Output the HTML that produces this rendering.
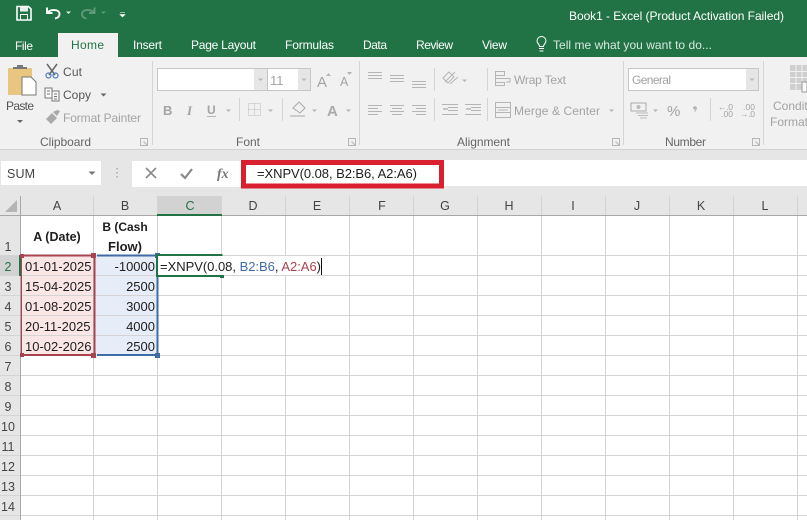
<!DOCTYPE html>
<html><head><meta charset="utf-8"><style>
html,body{margin:0;padding:0;background:#fff;width:807px;height:520px;overflow:hidden}
svg{display:block}
text{font-family:"Liberation Sans",sans-serif;font-size:12px}
.t{fill:#fff}.g{fill:#a3a3a3}.l{fill:#666}.c{fill:#1e1e1e;font-size:13px}.h{fill:#444;font-size:12.5px;text-anchor:middle}
.i{fill:none;stroke:#b5b5b5;stroke-width:1}
.d{fill:#b5b5b5}
</style></head><body>
<svg width="807" height="520" viewBox="0 0 807 520" xmlns="http://www.w3.org/2000/svg">
<!-- title bar -->
<rect width="807" height="57" fill="#217346"/>
<path d="M17 6.500h11.500l2.500 2.500V20H17z" fill="none" stroke="#fff" stroke-width="1.600"/>
<rect x="20" y="6.500" width="8" height="5" fill="#fff" opacity=".9"/><rect x="20.500" y="14.500" width="7" height="5.500" fill="none" stroke="#fff"/>
<path d="M47 7.500v5.500h5.500M47.500 12.500c3-3.500 12-3.500 12 1.500 0 2.500-2 4-4.500 4.500" fill="none" stroke="#fff" stroke-width="1.900"/>
<path d="M66 11.500h5l-2.500 2.500z" fill="#dfe9e3"/>
<path d="M94.500 7.500v5.500h-5.500M94 12.500c-3-3.500-12-3.500-12 1.500 0 2.500 2 4 4.500 4.500" fill="none" stroke="#5f9a7c" stroke-width="1.900"/>
<path d="M101 11.500h5l-2.500 2.500z" fill="#5f9a7c"/>
<path d="M120 12.500h5M120 14.500h5l-2.500 2.500z" fill="#fff" stroke="#fff" stroke-width=".6"/>
<text x="569" y="20" class="t" textLength="215">Book1 - Excel (Product Activation Failed)</text>
<!-- tabs -->
<rect x="58" y="33" width="60" height="24" fill="#f1f1f1"/>
<text x="15" y="50" class="t" textLength="18">File</text>
<text x="71" y="49" fill="#217346" textLength="33">Home</text>
<text x="133" y="49" class="t" textLength="29">Insert</text>
<text x="191" y="49" class="t" textLength="65">Page Layout</text>
<text x="285" y="49" class="t" textLength="49">Formulas</text>
<text x="363" y="49" class="t" textLength="24">Data</text>
<text x="416" y="49" class="t" textLength="37">Review</text>
<text x="482" y="49" class="t" textLength="25">View</text>
<path d="M539 48.500h5M539.500 51h4M539.500 46.500c0-2.500-2.500-3-2.500-5.500a4.500 4.500 0 0 1 9 0c0 2.500-2.500 3-2.500 5.500z" fill="none" stroke="#fff" stroke-width="1"/>
<text x="553" y="49" fill="#d8e8de" textLength="159">Tell me what you want to do...</text>
<!-- ribbon -->
<rect y="57" width="807" height="92" fill="#f1f1f1"/>
<rect y="149" width="807" height="1" fill="#d2d2d2"/>
<!-- paste -->
<rect x="8" y="68" width="24" height="27" rx="1" fill="#e8c67f"/>
<path d="M13 69v-2h4v-2h6v2h4v2z" fill="#777"/>
<path d="M22 77h9l5 5v13H22z" fill="#fff" stroke="#777"/>
<text x="6" y="110" fill="#555" textLength="28">Paste</text>
<path d="M17 120h6l-3 3z" fill="#666"/>
<path d="M47 64l8 11M57 64l-8 11" stroke="#666" stroke-width="1.500" fill="none"/>
<circle cx="48.500" cy="75.500" r="2.500" fill="none" stroke="#4f7fb5" stroke-width="1.200"/><circle cx="55.500" cy="75.500" r="2.500" fill="none" stroke="#4f7fb5" stroke-width="1.200"/>
<text x="63" y="76" fill="#555" textLength="19">Cut</text>
<path d="M45 88h7v10h-7zM52 91h7v10h-7zM47 91h3M47 94h3M54 94h3M54 96.500h3M54 99h3" fill="#fafafa" stroke="#777"/>
<text x="63" y="99" fill="#555" textLength="28">Copy</text>
<path d="M100.500 93.500h6l-3 3z" fill="#666"/>
<path d="M46 119l6-6 5 5-6 6zM53 112l4-2 3 1-3 5z" fill="#aaa"/>
<text x="63" y="122" class="g" textLength="78">Format Painter</text>
<text x="40" y="146" class="l" textLength="51">Clipboard</text>
<g class="i"><path d="M140.500 138.500h7v7h-7zM143.500 141.500l4 4"/></g>
<rect x="152" y="61" width="1" height="84" fill="#d5d5d5"/>
<!-- font -->
<rect x="157.500" y="68.500" width="153" height="22" fill="#fff" stroke="#c6c6c6"/>
<rect x="254" y="69" width="13" height="21" fill="#e6e6e6"/><rect x="267" y="69" width="1" height="21" fill="#c6c6c6"/><rect x="298" y="69" width="12" height="21" fill="#e6e6e6"/>
<path d="M258 78.500h5l-2.500 2.500zM301.500 78.500h5l-2.500 2.500z" class="d"/>
<text x="270" y="85" class="g" style="font-size:13px">11</text>
<text x="317" y="87" class="g" style="font-size:15px">A</text><path d="M326 76l2.500-3 2.500 3z" class="d"/>
<text x="340" y="86" class="g" style="font-size:12.500px">A</text><path d="M347 72h5l-2.500 3z" class="d"/>
<text x="163" y="115" class="g" style="font-weight:bold;font-size:13px">B</text>
<text x="187" y="115" class="g" style="font-style:italic;font-weight:bold;font-size:13px;font-family:'Liberation Serif',serif">I</text>
<text x="207" y="114" class="g" style="font-weight:bold;font-size:12px">U</text><rect x="207" y="116" width="9" height="1" fill="#b5b5b5"/>
<path d="M226 109.500h5l-2.500 2.500z" class="d"/><rect x="239" y="98" width="1" height="23" fill="#d5d5d5"/>
<rect x="248.500" y="103.500" width="12" height="12" fill="none" stroke="#bbb" stroke-dasharray="1 1"/><path d="M248.500 109.500h12M254.500 103.500v12" stroke="#bbb" stroke-dasharray="1 1"/>
<path d="M268 109.500h5l-2.500 2.500z" class="d"/><rect x="282" y="98" width="1" height="23" fill="#d5d5d5"/>
<path d="M293 108l6-6 6 6-5 5z" fill="none" stroke="#aaa"/><rect x="290" y="115" width="15" height="2" fill="#ccc"/>
<path d="M312 109.500h5l-2.500 2.500z" class="d"/>
<text x="327" y="116" class="g" style="font-size:15px;font-weight:bold;fill:#aaa">A</text>
<path d="M346 109.500h5l-2.500 2.500z" class="d"/>
<text x="236" y="146" class="l" textLength="24">Font</text>
<g class="i"><path d="M348.500 138.500h7v7h-7zM351.500 141.500l4 4"/></g>
<rect x="359" y="61" width="1" height="84" fill="#d5d5d5"/>
<!-- alignment -->
<g class="i">
<path d="M368 72.500h14M368 75.500h14M368 78.500h14M390 75.500h14M390 78.500h14M390 81.500h14M412 81.500h14M412 84.500h14M412 87.500h14"/>
<path d="M368 105.500h14M368 108.500h10M368 111.500h14M368 114.500h10M390 105.500h14M392 108.500h10M390 111.500h14M392 114.500h10M412 105.500h14M416 108.500h10M412 111.500h14M416 114.500h10"/>
<path d="M442 104.500h16M448 107.500h10M448 110.500h10M442 114.500h16M465 104.500h16M471 107.500h10M471 110.500h10M465 114.500h16"/>
<path d="M443 109h5M466 109h5" stroke="#999"/>
<path d="M445 82l10-10M443 78l6-6 5 5-6 6zM450 84l8-7" />
<path d="M495.500 71.500h9v4h-9zM495.500 78.500h15M495.500 85.500h9v-3h-9zM495.500 71.500v14M510 78v4h-4"/>
<path d="M495.500 102.500h15v15h-15zM495.500 107.500h15M495.500 112.500h15M498 110h10"/>
</g>
<path d="M462 79.500h5l-2.500 2.500z" class="d"/>
<rect x="434" y="68" width="1" height="23" fill="#d5d5d5"/><rect x="434" y="98" width="1" height="23" fill="#d5d5d5"/>
<rect x="487" y="68" width="1" height="23" fill="#d5d5d5"/><rect x="487" y="98" width="1" height="23" fill="#d5d5d5"/>
<text x="514" y="84" class="g" textLength="52">Wrap Text</text>
<text x="514" y="115" class="g" textLength="86">Merge &amp; Center</text>
<path d="M609 109.500h5l-2.500 2.500z" class="d"/>
<text x="457" y="146" class="l" textLength="53">Alignment</text>
<g class="i"><path d="M612.500 138.500h7v7h-7zM615.500 141.500l4 4"/></g>
<rect x="623" y="61" width="1" height="84" fill="#d5d5d5"/>
<!-- number -->
<rect x="628.500" y="68.500" width="130" height="22" fill="#fff" stroke="#c6c6c6"/>
<rect x="746" y="69" width="12" height="21" fill="#e6e6e6"/>
<path d="M749.500 78.500h5l-2.500 2.500z" class="d"/>
<text x="632" y="84" class="g" textLength="39">General</text>
<path d="M631 103h15v8h-15z" fill="none" stroke="#aaa"/><circle cx="638.500" cy="107" r="2" fill="#bbb"/><path d="M636 113h12M638 115.500h10M640 118h7" stroke="#bbb"/>
<path d="M653 109.500h5l-2.500 2.500z" class="d"/>
<text x="667" y="116" class="g" style="font-size:15px" textLength="14">%</text>
<path d="M693 108a2 2 0 1 1 3.500 1.500l-1.500 2.500-.7-.4 .8-2a2 2 0 0 1-2.100-1.600z" class="d"/>
<rect x="710" y="98" width="1" height="23" fill="#d5d5d5"/>
<text x="718" y="110" class="g" style="font-size:8.500px" textLength="15">←.0</text><text x="721" y="117" class="g" style="font-size:8.500px" textLength="12">.00</text>
<text x="743" y="110" class="g" style="font-size:8.500px" textLength="12">.00</text><text x="740" y="117" class="g" style="font-size:8.500px" textLength="15">→.0</text>
<text x="665" y="146" class="l" textLength="41">Number</text>
<g class="i"><path d="M752.500 138.500h7v7h-7zM755.500 141.500l4 4"/></g>
<rect x="763" y="61" width="1" height="84" fill="#d5d5d5"/>
<rect x="790" y="65" width="17" height="25" fill="#cfcfcf"/>
<path d="M790 71.500h17M790 77.500h17M790 83.500h17M796 65v25M802 65v25" stroke="#f1f1f1"/>
<rect x="802" y="82" width="5" height="10" fill="#fafafa" stroke="#999"/>
<text x="773" y="110" class="g">Conditional</text>
<text x="770" y="126" class="g">Formatting</text>
<!-- formula bar -->
<rect y="150" width="807" height="46" fill="#e6e6e6"/>
<rect x="1" y="161" width="100" height="24" fill="#fff"/>
<text x="7" y="178" style="font-size:12.500px" fill="#444" textLength="28">SUM</text>
<path d="M88.500 171.500h7l-3.500 3.500z" fill="#777"/>
<path d="M117 168v1.500M117 172v1.500M117 176v1.500" stroke="#aaa" stroke-width="1.500"/>
<rect x="132" y="161" width="108" height="26" fill="#fff"/>
<rect x="240" y="160" width="567" height="26" fill="#fff"/>
<path d="M146 168l10 10M156 168l-10 10" stroke="#8a8a8a" stroke-width="1.600" fill="none"/>
<path d="M181 174l4 4 7-9" stroke="#8a8a8a" stroke-width="2.200" fill="none"/>
<text x="217" y="178" style="font-family:'Liberation Serif',serif;font-style:italic;font-weight:bold;font-size:14px" fill="#777">fx</text>
<rect x="243.500" y="162.500" width="198" height="23.500" fill="#fff" stroke="#d9202f" stroke-width="5"/>
<text x="257" y="178" class="c" fill="#222" textLength="160">=XNPV(0.08, B2:B6, A2:A6)</text>
<!-- headers -->
<rect y="196" width="807" height="20" fill="#e6e6e6"/>
<rect y="216" width="21" height="304" fill="#e6e6e6"/>
<rect x="157" y="196" width="65" height="19" fill="#d2d2d2"/>
<rect x="0" y="255" width="20" height="21" fill="#d2d2d2"/>
<path d="M17 200v12H5z" fill="#b4b4b4"/>
<g class="h">
<text x="57" y="210" class="h">A</text><text x="125" y="210" class="h">B</text><text x="190" y="210" class="h" style="fill:#217346">C</text><text x="253" y="210" class="h">D</text><text x="317" y="210" class="h">E</text><text x="382" y="210" class="h">F</text><text x="445" y="210" class="h">G</text><text x="509" y="210" class="h">H</text><text x="573" y="210" class="h">I</text><text x="637" y="210" class="h">J</text><text x="701" y="210" class="h">K</text><text x="765" y="210" class="h">L</text>
<text x="8" y="251" class="h">1</text><text x="8" y="271" class="h" style="fill:#217346">2</text><text x="8" y="291" class="h">3</text><text x="8" y="311" class="h">4</text><text x="8" y="331" class="h">5</text><text x="8" y="351" class="h">6</text><text x="8" y="371" class="h">7</text><text x="8" y="391" class="h">8</text><text x="8" y="411" class="h">9</text><text x="8" y="431" class="h">10</text><text x="8" y="451" class="h">11</text><text x="8" y="471" class="h">12</text><text x="8" y="491" class="h">13</text><text x="8" y="511" class="h">14</text>
</g>
<!-- fills -->
<rect x="21" y="255" width="73" height="100" fill="#fbe6e6"/>
<rect x="94" y="255" width="63" height="100" fill="#e6edf8"/>
<!-- grid -->
<g stroke="#d4d4d4" stroke-width="1" fill="none">
<path d="M0 215.500H807"/>
<path d="M0 255.500H807M0 275.500H807M0 295.500H807M0 315.500H807M0 335.500H807M0 355.500H807M0 375.500H807M0 395.500H807M0 415.500H807M0 435.500H807M0 455.500H807M0 475.500H807M0 495.500H807M0 515.500H807"/>
<path d="M93.500 196V520M157.500 196V520M221.500 196V520M285.500 196V520M349.500 196V520M413.500 196V520M477.500 196V520M541.500 196V520M605.500 196V520M669.500 196V520M733.500 196V520M797.500 196V520"/>
</g>
<path d="M20.500 196V520" stroke="#a8a8a8"/>
<path d="M0 215.500H807" stroke="#a8a8a8"/>
<rect x="157" y="214" width="65" height="2" fill="#217346"/>
<rect x="19" y="255" width="2" height="21" fill="#217346"/>
<!-- cell text -->
<text x="57" y="241" text-anchor="middle" fill="#1e1e1e" style="font-weight:bold;font-size:12.500px">A (Date)</text>
<text x="125" y="231" text-anchor="middle" fill="#1e1e1e" style="font-weight:bold;font-size:12px">B (Cash</text>
<text x="125" y="251" text-anchor="middle" fill="#1e1e1e" style="font-weight:bold;font-size:13px">Flow)</text>
<g class="c">
<text x="25" y="271" class="c">01-01-2025</text><text x="25" y="291" class="c">15-04-2025</text><text x="25" y="311" class="c">01-08-2025</text><text x="25" y="331" class="c">20-11-2025</text><text x="25" y="351" class="c">10-02-2026</text>
<text x="155" y="271" class="c" text-anchor="end">-10000</text><text x="155" y="291" class="c" text-anchor="end">2500</text><text x="155" y="311" class="c" text-anchor="end">3000</text><text x="155" y="331" class="c" text-anchor="end">4000</text><text x="155" y="351" class="c" text-anchor="end">2500</text>
</g>
<!-- range borders -->
<path d="M24 255.500H91M94.500 258V353M24 355H91" fill="none" stroke="#a8434f" stroke-width="2"/>
<path d="M21.500 255V355" stroke="#a8434f" stroke-width="1"/>
<path d="M97 255.500H155M157.500 258V353M97 355H155" fill="none" stroke="#3f6ca6" stroke-width="2"/>
<rect x="20" y="254" width="4" height="4" fill="#a8434f"/><rect x="91" y="253" width="5" height="5" fill="#a8434f"/><rect x="20" y="353" width="4" height="4" fill="#a8434f"/><rect x="91" y="353" width="5" height="5" fill="#a8434f"/>
<rect x="155" y="253" width="5" height="5" fill="#3f6ca6"/><rect x="155" y="353" width="5" height="5" fill="#3f6ca6"/>
<!-- editing cell -->
<rect x="158" y="256" width="165" height="19" fill="#fff"/>
<path d="M157 255H222.500M157 276H222.500M157 254V277" fill="none" stroke="#217346" stroke-width="2"/>
<rect x="220" y="275" width="4" height="3" fill="#217346"/>
<text x="160" y="271" style="font-size:13px" fill="#1e1e1e" textLength="161">=XNPV(0.08, <tspan fill="#3f6ca6">B2:B6</tspan>, <tspan fill="#a8434f">A2:A6</tspan>)</text>
<rect x="321" y="258" width="1" height="17" fill="#111"/>
</svg>
</body></html>
